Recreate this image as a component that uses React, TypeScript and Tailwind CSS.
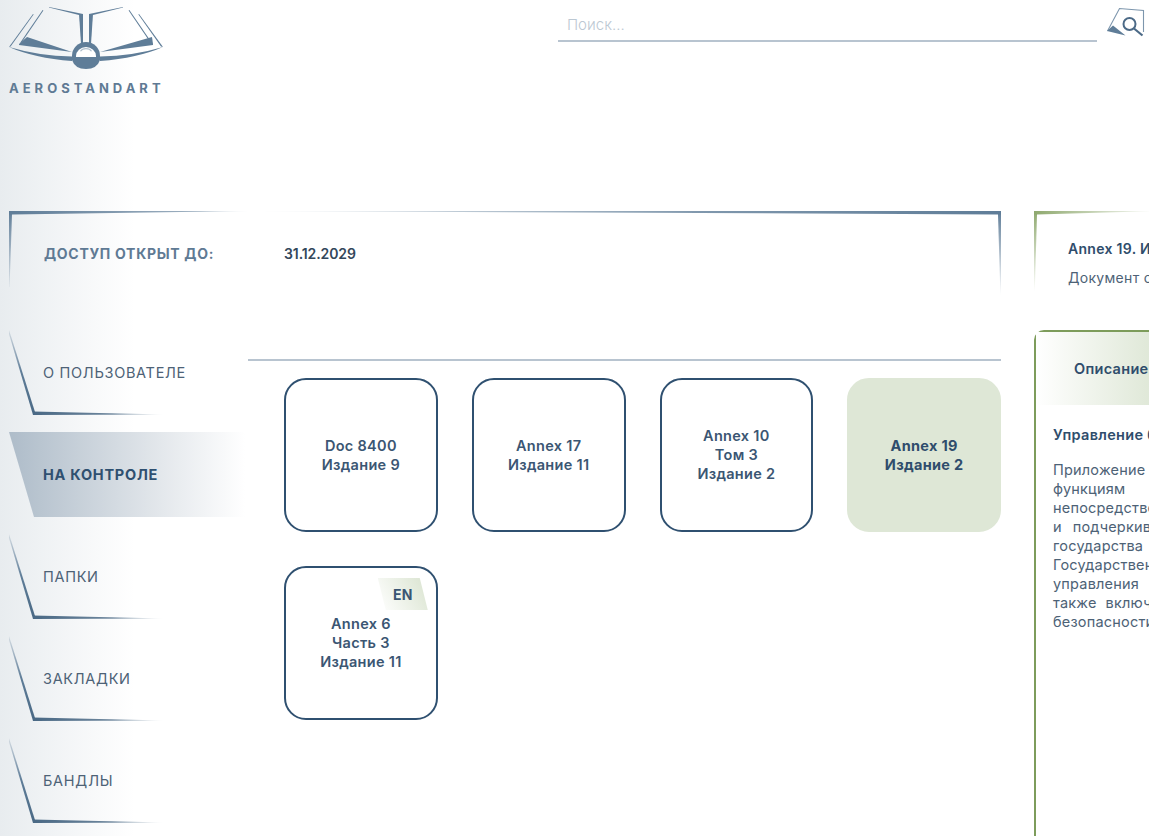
const font = "font-['Inter','Noto_Sans',sans-serif]";

function Logo() {
  return (
    <svg width="160" height="72" viewBox="0 0 160 72" className="block" fill="#5f7d98">
      <g>
        <polygon points="0,41 24,8 24.6,8.4 1.6,40.6" />
        <polygon points="154,41 130,8 129.4,8.4 152,40.6" />
        <polygon points="11,37 33.6,4 34.4,4.6 13,36" />
        <polygon points="143,37 120.4,4 119.6,4.6 141,36" />
        <polygon points="10,38 18,31 63,46 10,39" />
        <polygon points="144,38 143,31 91,46 144,39" />
        <path d="M0 41 Q30 50 63 50.5 L63 55 Q25 52 0 41 Z" />
        <path d="M154 41 Q124 50 91 50.5 L91 55 Q129 52 154 41 Z" />
        <path d="M40 1 L74 8 L74 9 L70 9 L40 1.6 Z" />
        <path d="M114 1 L80 8 L80 9 L84 9 L114 1.6 Z" />
        <polygon points="70,8 74,8 74,38 72,38" />
        <polygon points="84,8 80,8 80,38 82,38" />
        <path d="M63 50 A14 14 0 0 1 91 50 L91 54 Q88 63 77 63 Q66 63 63 54 Z" />
        <path d="M67 50 A10 9 0 0 1 87 50 L87 51 L67 51 Z" fill="#ffffff" />
        <path d="M71 45 A6.5 5 0 0 1 83 45 L82 45.6 A5.5 4 0 0 0 72 45.6 Z" fill="#5f7d98" opacity="0.5" />
      </g>
    </svg>
  );
}

function SearchIcon() {
  return (
    <svg width="40" height="32" viewBox="0 0 40 32" fill="none" className="block">
      <path d="M0.5 24 L12.5 1.5 L36.5 3.5 L36.5 25" stroke="#7d96ad" strokeWidth="1.1" />
      <polygon points="0,24 6,18.5 18.5,28.5" fill="#5f7d98" />
      <circle cx="22.5" cy="17" r="6" stroke="#4c6a87" strokeWidth="2" fill="#fff" />
      <path d="M27 21.5 L35.5 28.5" stroke="#4c6a87" strokeWidth="2.2" />
    </svg>
  );
}

function AccessFrame() {
  return (
    <svg width="992" height="84" className="absolute inset-0" aria-hidden="true">
      <defs>
        <linearGradient id="atl" x1="0" x2="240" y1="0" y2="0" gradientUnits="userSpaceOnUse">
          <stop offset="0" stopColor="#5f7d98" />
          <stop offset="0.8" stopColor="#5f7d98" stopOpacity="0.6" />
          <stop offset="1" stopColor="#5f7d98" stopOpacity="0.1" />
        </linearGradient>
        <linearGradient id="atr" x1="250" x2="992" y1="0" y2="0" gradientUnits="userSpaceOnUse">
          <stop offset="0" stopColor="#5f7d98" stopOpacity="0.1" />
          <stop offset="0.6" stopColor="#5f7d98" stopOpacity="0.8" />
          <stop offset="1" stopColor="#5f7d98" />
        </linearGradient>
        <linearGradient id="av" x1="0" x2="0" y1="0" y2="84" gradientUnits="userSpaceOnUse">
          <stop offset="0" stopColor="#5f7d98" />
          <stop offset="1" stopColor="#5f7d98" stopOpacity="0" />
        </linearGradient>
      </defs>
      <polygon points="0,0 240,0 3,3.4 0,3.4" fill="url(#atl)" />
      <polygon points="250,0 992,0 992,3.4 988,3.4" fill="url(#atr)" />
      <polygon points="0,0 3,3 0.6,76 0,76" fill="url(#av)" />
      <polygon points="992,0 989,3 991.4,84 992,84" fill="url(#av)" />
    </svg>
  );
}

function GreenFrame() {
  return (
    <svg width="240" height="80" className="absolute left-0 top-0" aria-hidden="true">
      <defs>
        <linearGradient id="gt" x1="0" x2="125" y1="0" y2="0" gradientUnits="userSpaceOnUse">
          <stop offset="0" stopColor="#8fa96f" />
          <stop offset="1" stopColor="#8fa96f" stopOpacity="0" />
        </linearGradient>
        <linearGradient id="gv" x1="0" x2="0" y1="0" y2="80" gradientUnits="userSpaceOnUse">
          <stop offset="0" stopColor="#8fa96f" />
          <stop offset="1" stopColor="#8fa96f" stopOpacity="0" />
        </linearGradient>
      </defs>
      <polygon points="0,0 125,0 3,3.6 0,3.6" fill="url(#gt)" />
      <polygon points="0,0 3,3 0.8,80 0,80" fill="url(#gv)" />
    </svg>
  );
}

function NavFrame({ id }: { id: string }) {
  return (
    <svg width="160" height="85" className="absolute left-0 top-0" aria-hidden="true">
      <defs>
        <linearGradient id={`nv${id}`} x1="0" x2="0" y1="0" y2="84" gradientUnits="userSpaceOnUse">
          <stop offset="0" stopColor="#5f7d98" stopOpacity="0.15" />
          <stop offset="0.5" stopColor="#5f7d98" />
          <stop offset="1" stopColor="#4a6985" />
        </linearGradient>
        <linearGradient id={`nh${id}`} x1="24" x2="156" y1="0" y2="0" gradientUnits="userSpaceOnUse">
          <stop offset="0" stopColor="#4a6985" />
          <stop offset="0.6" stopColor="#4a6985" stopOpacity="0.8" />
          <stop offset="1" stopColor="#4a6985" stopOpacity="0" />
        </linearGradient>
      </defs>
      <polygon points="0,0 26,82 24,85 0,4" fill={`url(#nv${id})`} />
      <polygon points="24,81.5 156,84.5 24,85" fill={`url(#nh${id})`} />
    </svg>
  );
}

function NavItem({ label, id }: { label: string; id: string }) {
  return (
    <div className="relative flex h-[85px] w-[236px] items-center pl-[34px]">
      <NavFrame id={id} />
      <span className="text-[14.5px] tracking-[0.7px] text-[#4d6276]">{label}</span>
    </div>
  );
}

function Card({ lines, active, badge }: { lines: string[]; active?: boolean; badge?: string }) {
  return (
    <div
      className={`relative flex h-[154px] flex-col items-center justify-center rounded-[22px] border-2 text-center text-[14.5px] leading-[19px] tracking-[0.3px] ${
        active ? "border-[#dee7d6] bg-[#dee7d6] font-bold text-[#2f4d6c]" : "border-[#2f5070] bg-white font-semibold text-[#3b5673]"
      } ${lines.length === 3 ? "pb-[2px]" : ""}`}
    >
      {badge && (
        <span className="absolute right-[8px] top-[10px] flex h-[32px] w-[50px] items-center justify-end bg-[linear-gradient(60deg,#ffffff,#d9e3cf)] pr-[15px] text-[14px] font-bold text-[#3b5673] [clip-path:polygon(0_0,84%_0,100%_100%,16%_100%)]">
          {badge}
        </span>
      )}
      {lines.map((l) => (
        <div key={l}>{l}</div>
      ))}
    </div>
  );
}

const paragraph = [
  "Приложение 19 содержит Стандарты и Рекомендуемую практику",
  "функциям управления безопасностью, непосредственно",
  "непосредственно с безопасной эксплуатацией воздушных судов",
  "и подчеркивает роль государства в управлении безопасностью",
  "государства в области обеспечения безопасности полётов.",
  "Государственная программа по безопасности полётов и системы",
  "управления безопасностью полётов поставщиков обслуживания",
  "также включает сбор и анализ данных о состоянии показателей",
  "безопасности полётов и обмен этими данными всех поставщиков",
];

export default function App() {
  return (
    <div
      className={`flex h-[836px] w-[1149px] flex-col overflow-hidden bg-[linear-gradient(90deg,#e8ecef_0px,#ffffff_135px)] ${font}`}
    >
      <header className="flex h-[211px] shrink-0 items-start">
        <div className="ml-[9px] w-[160px] pt-[6px]">
          <Logo />
          <div className="mt-[2px] whitespace-nowrap text-[13px] font-bold leading-[16px] tracking-[4px] text-[#5f7a94]">
            AEROSTANDART
          </div>
        </div>
        <div className="ml-[389px] mt-[10px] h-[32px] w-[539px] border-b-2 border-[#b8c4d0] pl-[9px] text-[15px] font-light leading-[30px] text-[#bcc8d3]">
          Поиск...
        </div>
        <div className="ml-[10px] mt-[7px]">
          <SearchIcon />
        </div>
      </header>

      <div className="flex min-h-0 flex-1">
        <div className="ml-[9px] w-[992px] shrink-0">
          <div className="relative flex h-[84px] items-start pt-[33px] text-[14px] leading-[20px]">
            <AccessFrame />
            <span className="ml-[35px] w-[240px] font-bold tracking-[0.7px] text-[#5f7a94]">ДОСТУП ОТКРЫТ ДО:</span>
            <span className="font-semibold tracking-[-0.1px] text-[#33475b]">31.12.2029</span>
          </div>

          <div className="mt-[35px] flex">
            <nav className="flex w-[239px] shrink-0 flex-col gap-[17px]">
              <NavItem id="a" label="О ПОЛЬЗОВАТЕЛЕ" />
              <div className="flex h-[85px] w-[236px] items-center bg-[linear-gradient(90deg,#aebcc9,#e4e8ec_65%,#ffffff)] pl-[34px] text-[14.5px] font-bold tracking-[0.75px] text-[#2f5070] [clip-path:polygon(0_0,100%_0,100%_100%,25px_100%)]">
                НА КОНТРОЛЕ
              </div>
              <NavItem id="b" label="ПАПКИ" />
              <NavItem id="c" label="ЗАКЛАДКИ" />
              <NavItem id="d" label="БАНДЛЫ" />
            </nav>

            <main className="flex-1 pt-[29px]">
              <div className="h-[2px] bg-[#b8c4d0]" />
              <div className="ml-[36px] mt-[17px] grid grid-cols-4 gap-[34px]">
                <Card lines={["Doc 8400", "Издание 9"]} />
                <Card lines={["Annex 17", "Издание 11"]} />
                <Card lines={["Annex 10", "Том 3", "Издание 2"]} />
                <Card lines={["Annex 19", "Издание 2"]} active />
                <Card lines={["Annex 6", "Часть 3", "Издание 11"]} badge="EN" />
              </div>
            </main>
          </div>
        </div>

        <aside className="ml-[33px] w-[560px] shrink-0">
          <div className="relative h-[84px] whitespace-nowrap pl-[34px] pt-[28px] text-[14px] leading-[20px]">
            <GreenFrame />
            <div className="font-semibold tracking-[0.3px] text-[#2f4d6c]">Annex 19. Издание 2</div>
            <div className="mt-[9px] tracking-[0.3px] text-[#4d6276]">Документ опубликован</div>
          </div>

          <div className="mt-[35px] h-[520px] rounded-tl-[10px] border-2 border-b-0 border-r-0 border-[#7d9c5b]">
            <div className="flex h-[73px] items-center bg-[linear-gradient(90deg,#ffffff,#dee7d6_120px)] pl-[38px] text-[14.5px] font-semibold tracking-[0.3px] text-[#2f4d6c]">
              Описание документа
            </div>
            <div className="pl-[17px] pt-[20px] text-[14.5px] leading-[19px] text-[#4d6276]">
              <div className="whitespace-nowrap font-semibold tracking-[0.3px] text-[#2f4d6c]">
                Управление безопасностью полётов
              </div>
              <div className="mt-[16px]">
                {paragraph.map((l) => (
                  <div key={l} className="w-[510px] text-justify tracking-[0.2px] [text-align-last:justify]">
                    {l}
                  </div>
                ))}
              </div>
            </div>
          </div>
        </aside>
      </div>
    </div>
  );
}
